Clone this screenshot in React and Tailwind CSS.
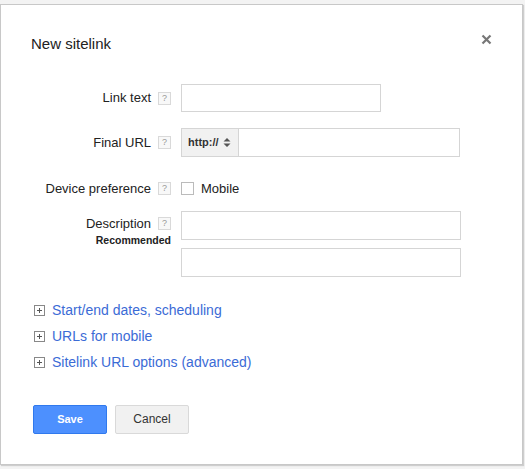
import React from 'react';

const Help = () => (
    <span className="w-[13px] h-[13px] border border-[#d9d9d9] bg-[#f8f8f8] text-[9px] leading-[11px] text-[#999] flex items-center justify-center shrink-0">?</span>
);

const Plus = () => (
    <svg width="11" height="11" viewBox="0 0 11 11" className="shrink-0">
        <rect x="0.5" y="0.5" width="10" height="10" fill="#fff" stroke="#888" />
        <path d="M3 5.5h5M5.5 3v5" stroke="#555" strokeWidth="1" />
    </svg>
);

const Row = ({ label, children, className = '' }) => (
    <div className={`flex items-center ${className}`}>
        <div className="w-[120px] text-right text-[13px] text-[#222]">{label}</div>
        <div className="ml-[7px]"><Help /></div>
        <div className="ml-[10px] flex items-center">{children}</div>
    </div>
);

export default function App() {
    return (
        <div className="w-[525px] h-[469px] bg-[#f3f3f3] pt-[4px] font-['Liberation_Sans',Arial,sans-serif]">
            <div className="w-[523px] h-[461px] bg-white border border-[#c8c8c8] shadow-[1px_1px_1px_rgba(0,0,0,0.15)] relative">
                <div className="pl-[30px] pt-[29px] text-[15px] leading-[20px] text-[#222]">New sitelink</div>
                <button className="absolute right-[30px] top-[29px] text-[#777]">
                    <svg width="11" height="11" viewBox="0 0 11 11">
                        <path d="M1.5 1.5l8 8M9.5 1.5l-8 8" stroke="#777" strokeWidth="2.2" />
                    </svg>
                </button>

                <div className="mt-[30px] pl-[30px]">
                    <Row label="Link text">
                        <div className="w-[200px] h-[28px] border border-[#d5d5d5]" />
                    </Row>
                    <Row label="Final URL" className="mt-[16px]">
                        <div className="flex w-[279px] h-[29px] border border-[#d5d5d5]">
                            <div className="w-[57px] bg-[#f1f1f1] border-r border-[#d5d5d5] flex items-center pl-[6px] gap-[4px]">
                                <span className="text-[11px] font-bold text-[#333]">http://</span>
                                <svg width="8" height="11" viewBox="0 0 8 11">
                                    <path d="M0.5 4.5L4 1l3.5 3.5zM0.5 6.5L4 10l3.5-3.5z" fill="#555" />
                                </svg>
                            </div>
                        </div>
                    </Row>
                    <Row label="Device preference" className="mt-[22px]">
                        <div className="w-[13px] h-[13px] border border-[#bbb] bg-white" />
                        <span className="ml-[7px] text-[13px] text-[#222]">Mobile</span>
                    </Row>

                    <div className="flex mt-[12px]">
                        <div className="w-[140px] flex flex-col items-end pt-[5px]">
                            <div className="flex items-center">
                                <span className="text-[13px] leading-[16px] text-[#222]">Description</span>
                                <span className="ml-[7px]"><Help /></span>
                            </div>
                            <span className="text-[10.5px] leading-[13px] font-bold text-[#222] mt-[2px]">Recommended</span>
                        </div>
                        <div className="ml-[10px] flex flex-col gap-[8px]">
                            <div className="w-[280px] h-[29px] border border-[#d5d5d5]" />
                            <div className="w-[280px] h-[29px] border border-[#d5d5d5]" />
                        </div>
                    </div>
                </div>

                <div className="mt-[21px] pl-[33px] flex flex-col">
                    {['Start/end dates, scheduling', 'URLs for mobile', 'Sitelink URL options (advanced)'].map((t) => (
                        <div key={t} className="flex items-center h-[26px] gap-[7px]">
                            <Plus />
                            <span className="text-[14px] text-[#3b6bd6]">{t}</span>
                        </div>
                    ))}
                </div>

                <div className="mt-[29px] pl-[32px] flex gap-[8px]">
                    <button className="w-[74px] h-[29px] bg-[#4d90fe] border border-[#3079ed] rounded-[2px] text-white text-[11px] font-bold">Save</button>
                    <button className="w-[74px] h-[29px] bg-[#f1f1f1] border border-[#d9d9d9] rounded-[2px] text-[#333] text-[12px]">Cancel</button>
                </div>
            </div>
        </div>
    );
}
